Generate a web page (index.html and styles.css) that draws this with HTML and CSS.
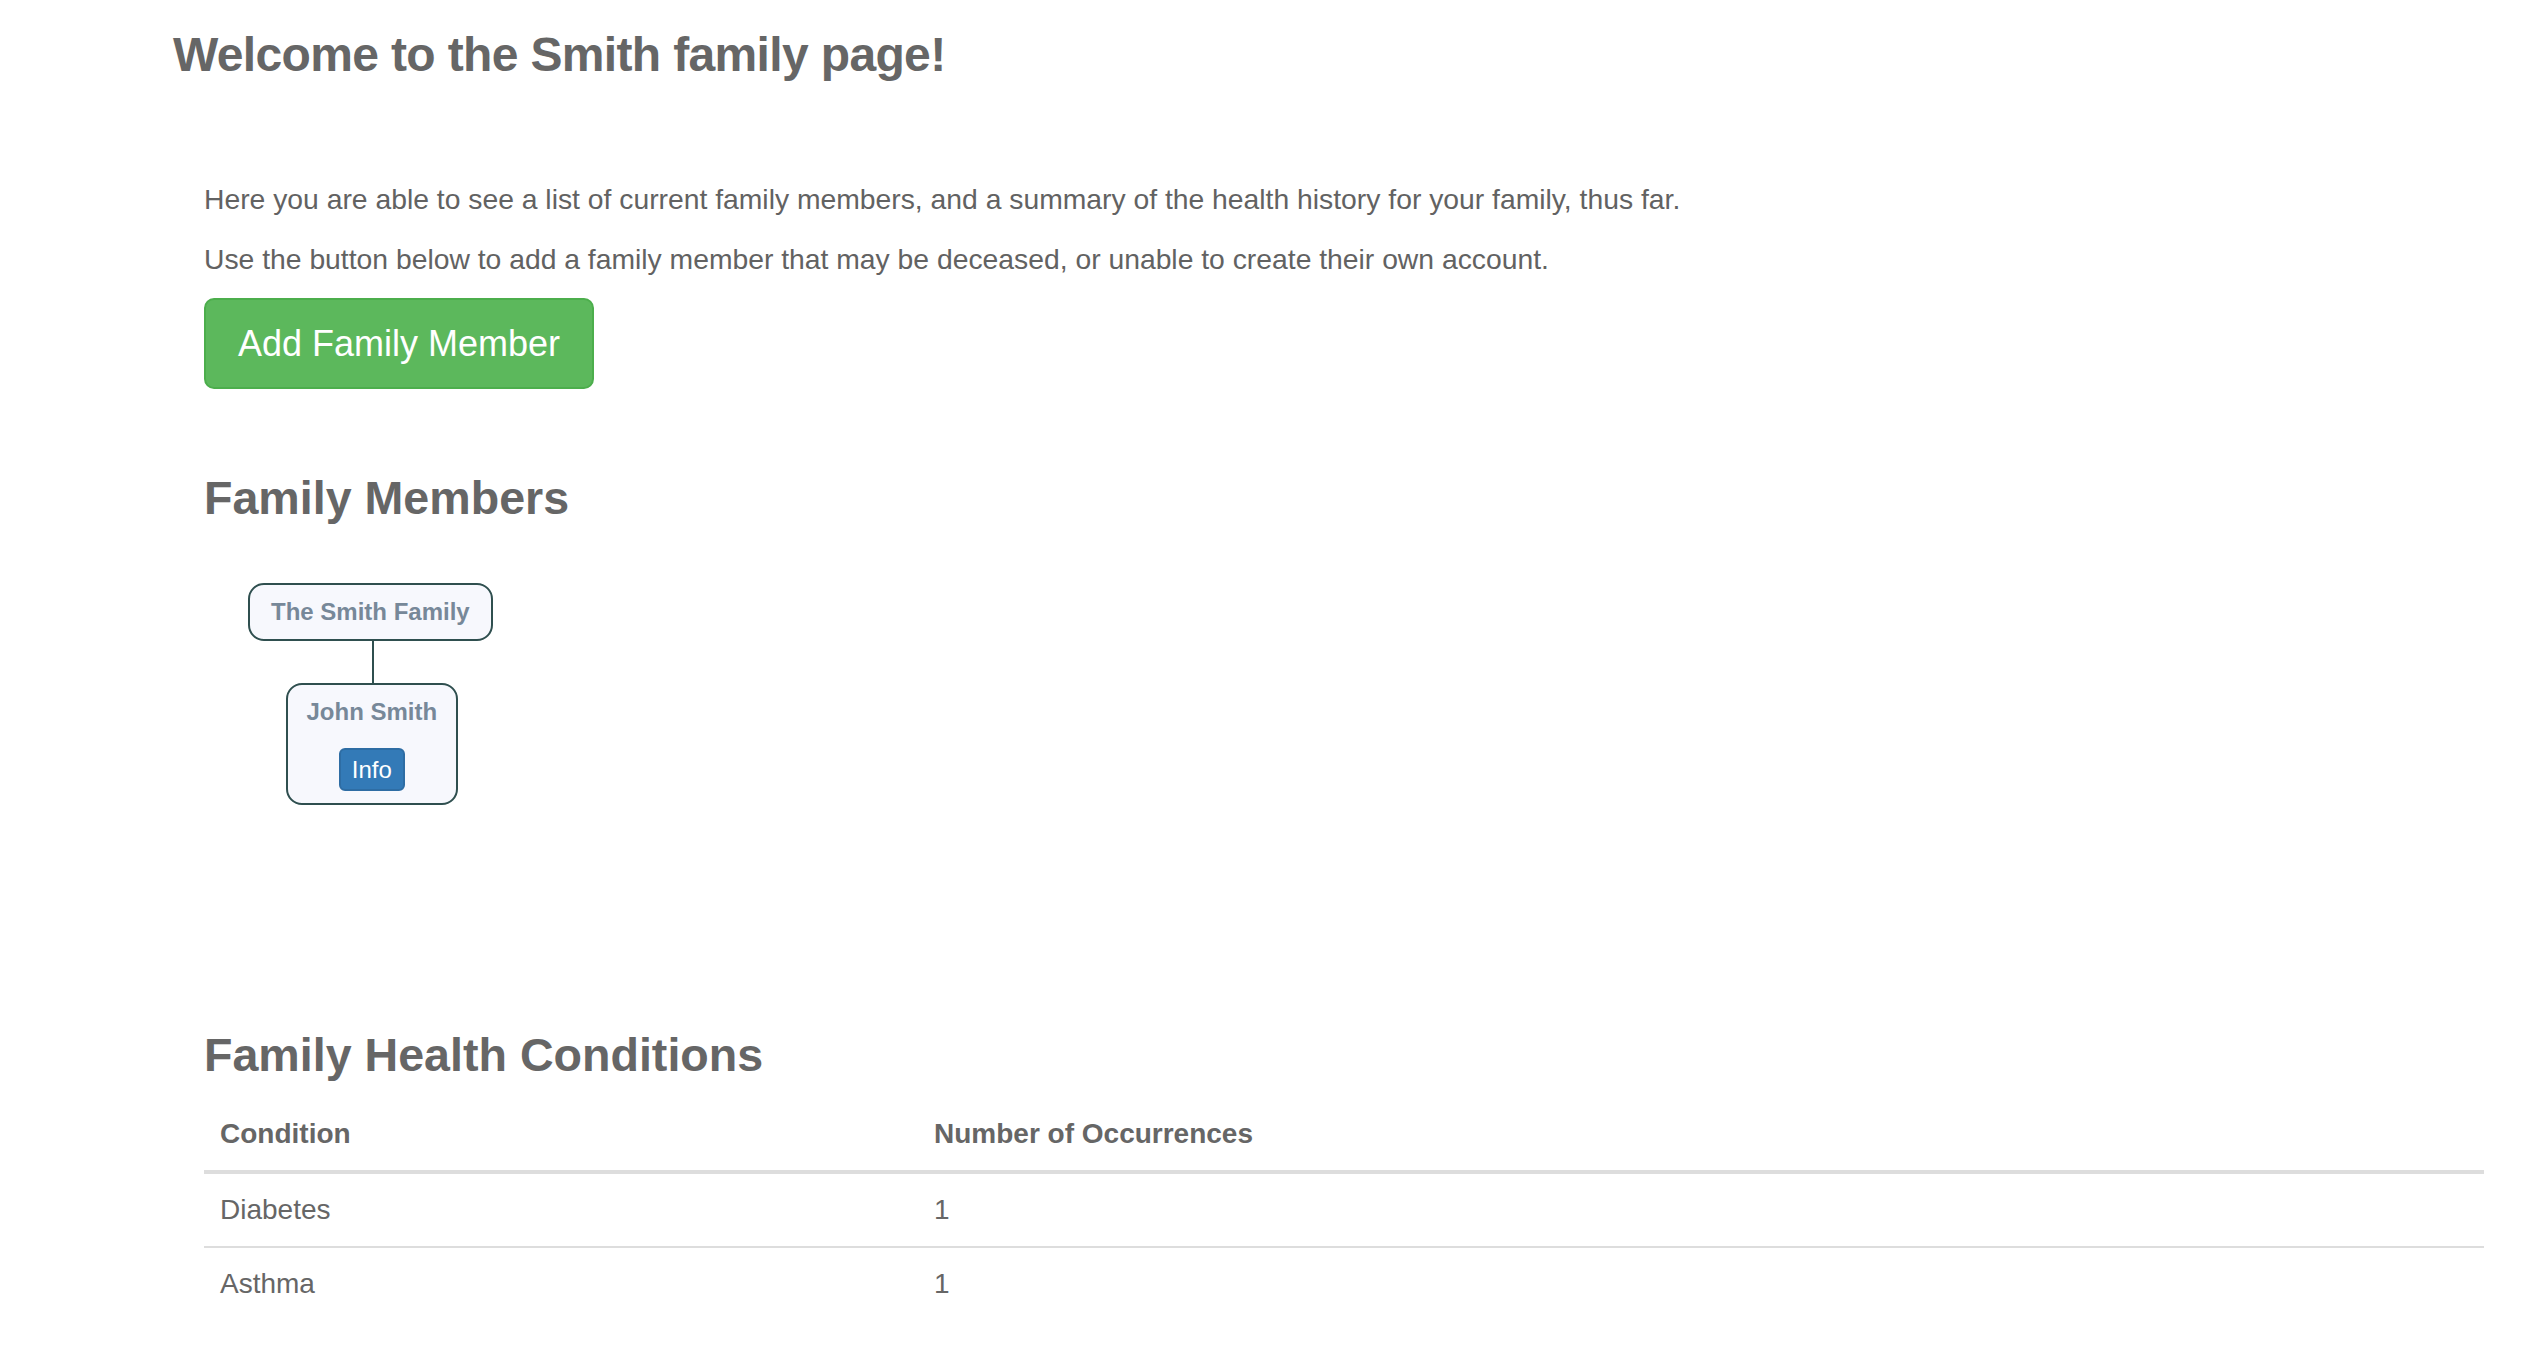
FILE: index.html
```html
<!DOCTYPE html>
<html lang="en">
<head>
<meta charset="utf-8">
<title>Smith family page</title>
<link rel="stylesheet" href="styles.css">
</head>
<body>
<header class="page-header">
  <h1 class="welcome">Welcome to the Smith family page!</h1>
</header>
<main class="content">
  <p class="intro intro-first">Here you are able to see a list of current family members, and a summary of the health history for your family, thus far.</p>
  <p class="intro">Use the button below to add a family member that may be deceased, or unable to create their own account.</p>
  <button class="btn-add" type="button">Add Family Member</button>

  <h2 class="section-title members-title">Family Members</h2>
  <div class="tree">
    <div class="node node-root">The Smith Family</div>
    <div class="connector"></div>
    <div class="node node-person">
      <span class="node-name">John Smith</span>
      <button class="btn-info" type="button">Info</button>
    </div>
  </div>

  <h2 class="section-title conditions-title">Family Health Conditions</h2>
  <table class="conditions">
    <thead>
      <tr><th class="col-condition">Condition</th><th>Number of Occurrences</th></tr>
    </thead>
    <tbody>
      <tr><td>Diabetes</td><td>1</td></tr>
      <tr><td>Asthma</td><td>1</td></tr>
    </tbody>
  </table>
</main>
</body>
</html>
```
FILE: styles.css
```css
html, body {
  margin: 0;
  padding: 0;
  background: #fff;
}
body {
  font-family: "Liberation Sans", Arial, Helvetica, sans-serif;
  color: #666;
}
.page-header {
  padding: 27px 0 0 173px;
}
.welcome {
  margin: 0;
  font-size: 48px;
  line-height: 55px;
  letter-spacing: -0.65px;
  font-weight: bold;
  color: #666;
}
.content {
  padding: 0 0 0 204px;
  width: 2280px;
}
.intro {
  margin: 0;
  font-size: 28.3px;
  line-height: 40px;
  color: #626262;
}
.intro-first {
  margin-top: 97px;
  margin-bottom: 20px;
}
.btn-add {
  display: inline-flex;
  align-items: center;
  box-sizing: border-box;
  height: 91px;
  margin-top: 19px;
  padding: 0 32px;
  font-family: inherit;
  font-size: 36px;
  color: #fff;
  background: #5cb85c;
  border: 2px solid #4cae4c;
  border-radius: 10px;
}
.section-title {
  margin: 0;
  font-size: 46.6px;
  line-height: 52px;
  font-weight: bold;
  color: #666;
}
.members-title {
  margin-top: 83px;
}
.tree {
  display: inline-flex;
  flex-direction: column;
  align-items: center;
  margin: 59px 0 0 44px;
}
.node {
  box-sizing: border-box;
  background: #f7f8fd;
  border: 2px solid #2f4f4f;
  border-radius: 16px;
  color: #778899;
  font-weight: bold;
  font-size: 24px;
}
.node-root {
  height: 58px;
  padding: 0 21px;
  display: flex;
  align-items: center;
}
.connector {
  width: 2px;
  height: 42px;
  margin-left: 6px;
  background: #2f4f4f;
}
.node-person {
  width: 172px;
  height: 122px;
  margin-left: 3px;
  display: flex;
  flex-direction: column;
  align-items: center;
  padding-top: 12px;
}
.node-name {
  line-height: 30px;
}
.btn-info {
  margin-top: 21px;
  box-sizing: border-box;
  height: 43px;
  padding: 0 11px;
  font-family: inherit;
  font-size: 24px;
  color: #fff;
  background: #337ab7;
  border: 2px solid #2e6da4;
  border-radius: 6px;
}
.conditions-title {
  display: block;
  margin-top: 224px;
}
.conditions {
  width: 2280px;
  margin-top: 17px;
  border-collapse: collapse;
  font-size: 28px;
  line-height: 40px;
  color: #666;
}
.conditions th,
.conditions td {
  text-align: left;
  padding: 16px;
  vertical-align: top;
}
.conditions th {
  font-weight: bold;
  border-bottom: 4px solid #ddd;
}
.conditions td {
  border-top: 2px solid #ddd;
}
.conditions tbody tr:first-child td {
  border-top: none;
}
.col-condition {
  width: 682px;
}
```
